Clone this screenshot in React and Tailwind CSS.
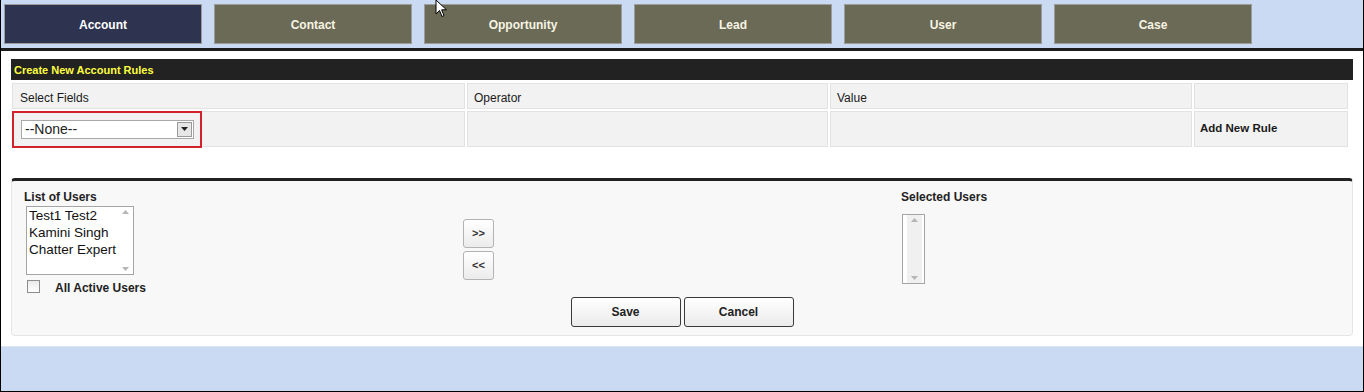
import React from "react";

const tabs = ["Account", "Contact", "Opportunity", "Lead", "User", "Case"];

function ScrollBar({ className = "" }) {
  return (
    <div className={`flex w-[15px] flex-col items-center justify-between bg-[#f0f0f0] py-[3px] ${className}`}>
      <svg width="7" height="4" viewBox="0 0 7 4">
        <path d="M0 4 L3.5 0 L7 4 Z" fill="#b5b5b5" />
      </svg>
      <svg width="7" height="4" viewBox="0 0 7 4">
        <path d="M0 0 L3.5 4 L7 0 Z" fill="#b5b5b5" />
      </svg>
    </div>
  );
}

function Cursor() {
  return (
    <svg className="absolute left-[434px] top-0" width="14" height="18" viewBox="0 0 14 18">
      <path d="M1 0 L1 14 L4.5 10.5 L7 16.5 L9 15.6 L6.6 9.8 L11.5 9.8 Z" fill="#fff" stroke="#000" strokeWidth="1" />
    </svg>
  );
}

export default function App() {
  return (
    <div
      className="relative flex h-[392px] w-[1364px] flex-col overflow-hidden border-x border-b border-black bg-white"
      style={{ fontFamily: '"Liberation Sans", Arial, sans-serif' }}
    >
      {/* Tab strip */}
      <div className="flex h-[48px] gap-[12px] bg-[#cbdaf3] pl-[3px] pt-[4px]">
        {tabs.map((t, i) => (
          <div
            key={t}
            className={`flex h-[40px] w-[198px] items-center justify-center border border-[#9c9c9c] pt-[1px] text-[12px] font-bold ${
              i === 0 ? "bg-[#2e3350] text-white" : "bg-[#6b6a56] text-[#f7f4e4]"
            }`}
          >
            {t}
          </div>
        ))}
      </div>
      <div className="h-[3px] bg-[#1c1c1c]" />
      <Cursor />

      <div className="flex-1 bg-white px-[10px] pt-[8px]">
        {/* Rules block */}
        <div className="flex h-[21px] items-center bg-[#222] px-[3px] pt-[1px] text-[11px] font-bold leading-[13px] text-[#ffff40]">
          Create New Account Rules
        </div>
        <div className="ml-[1px] w-[1338px] pt-[3px]">
          <div className="grid grid-cols-[453px_361px_362px_154px] gap-[2px] text-[12px] text-[#1a1a1a]">
            <div className="flex h-[26px] items-center border border-[#e2e2e2] bg-[#f2f2f2] pl-[7px] pt-[3px]">Select Fields</div>
            <div className="flex h-[26px] items-center border border-[#e2e2e2] bg-[#f2f2f2] pl-[6px] pt-[3px]">Operator</div>
            <div className="flex h-[26px] items-center border border-[#e2e2e2] bg-[#f2f2f2] pl-[6px] pt-[3px]">Value</div>
            <div className="h-[26px] border border-[#e2e2e2] bg-[#f2f2f2]" />
            <div className="flex h-[36px] items-center border border-[#e2e2e2] bg-[#f2f2f2]">
              <div className="-ml-[1px] flex h-[37px] w-[190px] items-center border-2 border-[#d3222c] pl-[7px]">
                <div className="flex h-[19px] w-[173px] items-center border border-[#a8a8a8] bg-white">
                  <span className="flex-1 pl-[3px] text-[14px] leading-none text-[#222]">--None--</span>
                  <div className="mr-[1px] flex h-[15px] w-[15px] items-center justify-center border border-[#9a9a9a] bg-[#e6e6e6]">
                    <svg width="7" height="4" viewBox="0 0 7 4">
                      <path d="M0 0 L3.5 4 L7 0 Z" fill="#222" />
                    </svg>
                  </div>
                </div>
              </div>
            </div>
            <div className="h-[36px] border border-[#e2e2e2] bg-[#f2f2f2]" />
            <div className="h-[36px] border border-[#e2e2e2] bg-[#f2f2f2]" />
            <div className="flex h-[36px] items-center border border-[#e2e2e2] bg-[#f2f2f2] pl-[5px] text-[11.5px] font-bold">
              Add New Rule
            </div>
          </div>
        </div>

        {/* Users block */}
        <div className="mt-[31px] rounded-[4px] border-t-[3px] border-t-[#222] border-x border-b border-[#e6e6e6] bg-[#f8f8f8] px-[12px] pb-[8px] pt-[8px]">
          <div className="flex">
            <div className="w-[439px]">
              <div className="text-[12px] font-bold leading-[17px] text-[#222]">List of Users</div>
              <div className="ml-[2px] flex h-[69px] w-[108px] border border-[#a5a5a5] bg-white">
                <div className="flex-1 whitespace-nowrap pl-[2px] text-[13.5px] leading-[17px] text-[#111]">
                  <div>Test1 Test2</div>
                  <div>Kamini Singh</div>
                  <div>Chatter Expert</div>
                </div>
                <ScrollBar className="bg-white" />
              </div>
              <div className="mt-[5px] flex h-[14px] items-start">
                <div className="ml-[3px] h-[13px] w-[13px] border border-[#8e8e8e] bg-gradient-to-b from-[#e9e9e9] to-white" />
                <span className="ml-[15px] mt-[1px] text-[12px] font-bold leading-[14px] text-[#222]">All Active Users</span>
              </div>
            </div>
            <div className="w-[438px] pt-[30px]">
              <div className="flex flex-col gap-[3px]">
                {[">>", "<<"].map((b) => (
                  <div
                    key={b}
                    className="flex h-[29px] w-[31px] items-center justify-center rounded-[3px] border border-[#b3b3b3] bg-gradient-to-b from-white to-[#ececec] text-[11px] font-bold text-[#333]"
                  >
                    {b}
                  </div>
                ))}
              </div>
            </div>
            <div>
              <div className="text-[12px] font-bold leading-[17px] text-[#222]">Selected Users</div>
              <div className="ml-[1px] mt-[8px] flex h-[70px] w-[23px] border border-[#a5a5a5] bg-white pl-[4px]">
                <ScrollBar />
              </div>
            </div>
          </div>
          <div className="mt-[3px] flex justify-center gap-[3px]">
            {["Save", "Cancel"].map((b) => (
              <div
                key={b}
                className="flex h-[30px] w-[110px] items-center justify-center rounded-[3px] border border-[#3a3a3a] bg-gradient-to-b from-white to-[#ebebeb] text-[12px] font-bold text-[#222]"
              >
                {b}
              </div>
            ))}
          </div>
        </div>
      </div>

      <div className="h-[45px] border-t border-[#dce5f3] bg-[#cbdaf3]" />
    </div>
  );
}
